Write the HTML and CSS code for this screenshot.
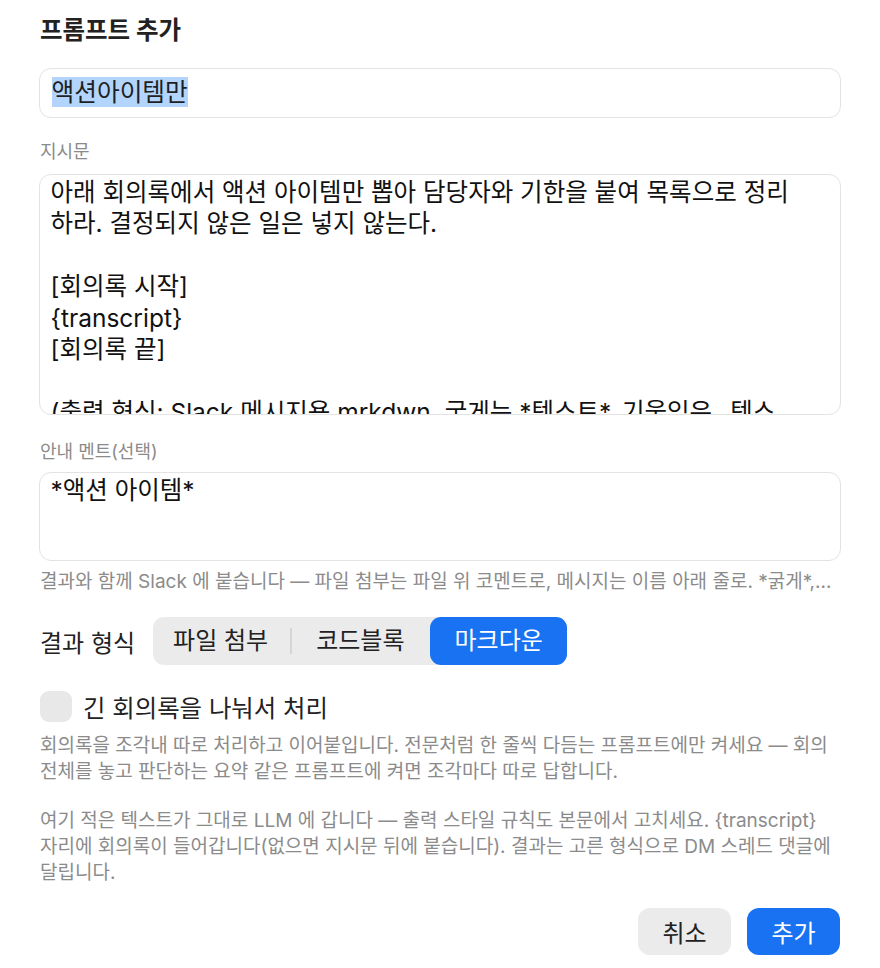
FILE: index.html
```html
<!DOCTYPE html>
<html lang="ko">
<head>
<meta charset="utf-8">
<title>프롬프트 추가</title>
<link rel="stylesheet" href="styles.css">
</head>
<body>
<div class="dialog">
  <h1 class="title">프롬프트 추가</h1>

  <div class="field name-field"><span class="selected">액션아이템만</span></div>

  <div class="label label-first">지시문</div>
  <div class="field textarea body-area">
    <div class="line">아래 회의록에서 액션 아이템만 뽑아 담당자와 기한을 붙여 목록으로 정리</div>
    <div class="line">하라. 결정되지 않은 일은 넣지 않는다.</div>
    <div class="line">&nbsp;</div>
    <div class="line">[회의록 시작]</div>
    <div class="line">{transcript}</div>
    <div class="line">[회의록 끝]</div>
    <div class="line">&nbsp;</div>
    <div class="line">(출력 형식: Slack 메시지용 mrkdwn. 굵게는 *텍스트*, 기울임은 _텍스</div>
  </div>

  <div class="label label-second">안내 멘트(선택)</div>
  <div class="field textarea intro-area">
    <div class="line">*액션 아이템*</div>
  </div>
  <div class="hint">결과와 함께 Slack 에 붙습니다 — 파일 첨부는 파일 위 코멘트로, 메시지는 이름 아래 줄로. *굵게*, _기울임_ 같은 mrkdwn 서식을 쓸 수 있습니다.</div>

  <div class="format-row">
    <span class="format-label">결과 형식</span>
    <div class="segmented">
      <span class="seg seg-first">파일 첨부</span>
      <span class="seg-divider"></span>
      <span class="seg seg-second">코드블록</span>
      <span class="seg seg-active">마크다운</span>
    </div>
  </div>

  <div class="check-row">
    <span class="checkbox"></span>
    <span class="check-label">긴 회의록을 나눠서 처리</span>
  </div>
  <p class="desc">회의록을 조각내 따로 처리하고 이어붙입니다. 전문처럼 한 줄씩 다듬는 프롬프트에만 켜세요 — 회의<br>전체를 놓고 판단하는 요약 같은 프롬프트에 켜면 조각마다 따로 답합니다.</p>
  <p class="desc desc-second">여기 적은 텍스트가 그대로 LLM 에 갑니다 — 출력 스타일 규칙도 본문에서 고치세요. {transcript}<br>자리에 회의록이 들어갑니다(없으면 지시문 뒤에 붙습니다). 결과는 고른 형식으로 DM 스레드 댓글에<br>달립니다.</p>

  <div class="actions">
    <button class="btn btn-cancel">취소</button>
    <button class="btn btn-primary">추가</button>
  </div>
</div>
</body>
</html>
```
FILE: styles.css
```css
html, body {
  margin: 0;
  padding: 0;
  background: #ffffff;
}
body {
  font-family: Inter, "Noto Sans CJK KR", sans-serif;
  color: #1f1f1f;
}
.dialog {
  width: 800px;
  padding: 15px 40px 0 40px;
}
.title {
  margin: 0;
  font-size: 24.5px;
  line-height: 30px;
  font-weight: 700;
  color: #222;
}
.field {
  box-sizing: border-box;
  margin: 0 -1px;
  border: 1.5px solid #e3e3e3;
  border-radius: 12px;
  background: #fff;
}
.name-field {
  margin-top: 23px;
  height: 50px;
  padding: 7px 0 0 11.5px;
  font-size: 24.7px;
  line-height: 32px;
}
.selected {
  background: #b3d5fd;
}
.label {
  font-size: 18px;
  line-height: 22px;
  color: #8b8b8b;
}
.label-first {
  margin-top: 23px;
  margin-bottom: 11px;
}
.label-second {
  margin-top: 26px;
  margin-bottom: 9px;
}
.textarea {
  overflow: hidden;
  padding: 1.5px 10px 0 10.5px;
  font-size: 24.5px;
  line-height: 31.5px;
  color: #111;
}
.line {
  white-space: nowrap;
}
.body-area {
  height: 241px;
}
.intro-area {
  height: 89px;
}
.hint {
  margin-top: 9px;
  font-size: 19px;
  line-height: 24px;
  color: #8b8b8b;
  white-space: nowrap;
  overflow: hidden;
  text-overflow: ellipsis;
  width: 794px;
}
.format-row {
  margin-top: 23px;
  display: flex;
  align-items: center;
  gap: 18px;
}
.format-label {
  font-size: 24px;
  color: #222;
}
.segmented {
  display: flex;
  align-items: center;
  height: 48px;
  background: #ebebeb;
  border-radius: 11px;
}
.seg {
  font-size: 24px;
  color: #222;
  line-height: 48px;
}
.seg-first {
  padding: 0 22px 0 20px;
}
.seg-second {
  padding: 0 24px;
}
.seg-divider {
  width: 2px;
  height: 26px;
  background: #d6d6d6;
}
.seg-active {
  background: #1872f2;
  color: #fff;
  border-radius: 11px;
  margin-left: 2px;
  padding: 0 24px;
}
.check-row {
  margin-top: 24px;
  display: flex;
  align-items: center;
  gap: 11px;
}
.checkbox {
  width: 32px;
  height: 31px;
  border-radius: 9px;
  background: #e8e8e8;
}
.check-label {
  font-size: 24.4px;
  color: #222;
}
.desc {
  margin: 9px 0 0 0;
  font-size: 19px;
  line-height: 26px;
  color: #8b8b8b;
}
.desc-second {
  margin-top: 23px;
}
.actions {
  margin-top: 22px;
  display: flex;
  justify-content: flex-end;
  gap: 16px;
}
.btn {
  border: none;
  width: 93px;
  height: 47px;
  border-radius: 12px;
  font-family: inherit;
  font-size: 24px;
  padding: 0;
}
.btn-cancel {
  background: #ebebeb;
  color: #222;
}
.btn-primary {
  background: #1872f2;
  color: #fff;
}
```
